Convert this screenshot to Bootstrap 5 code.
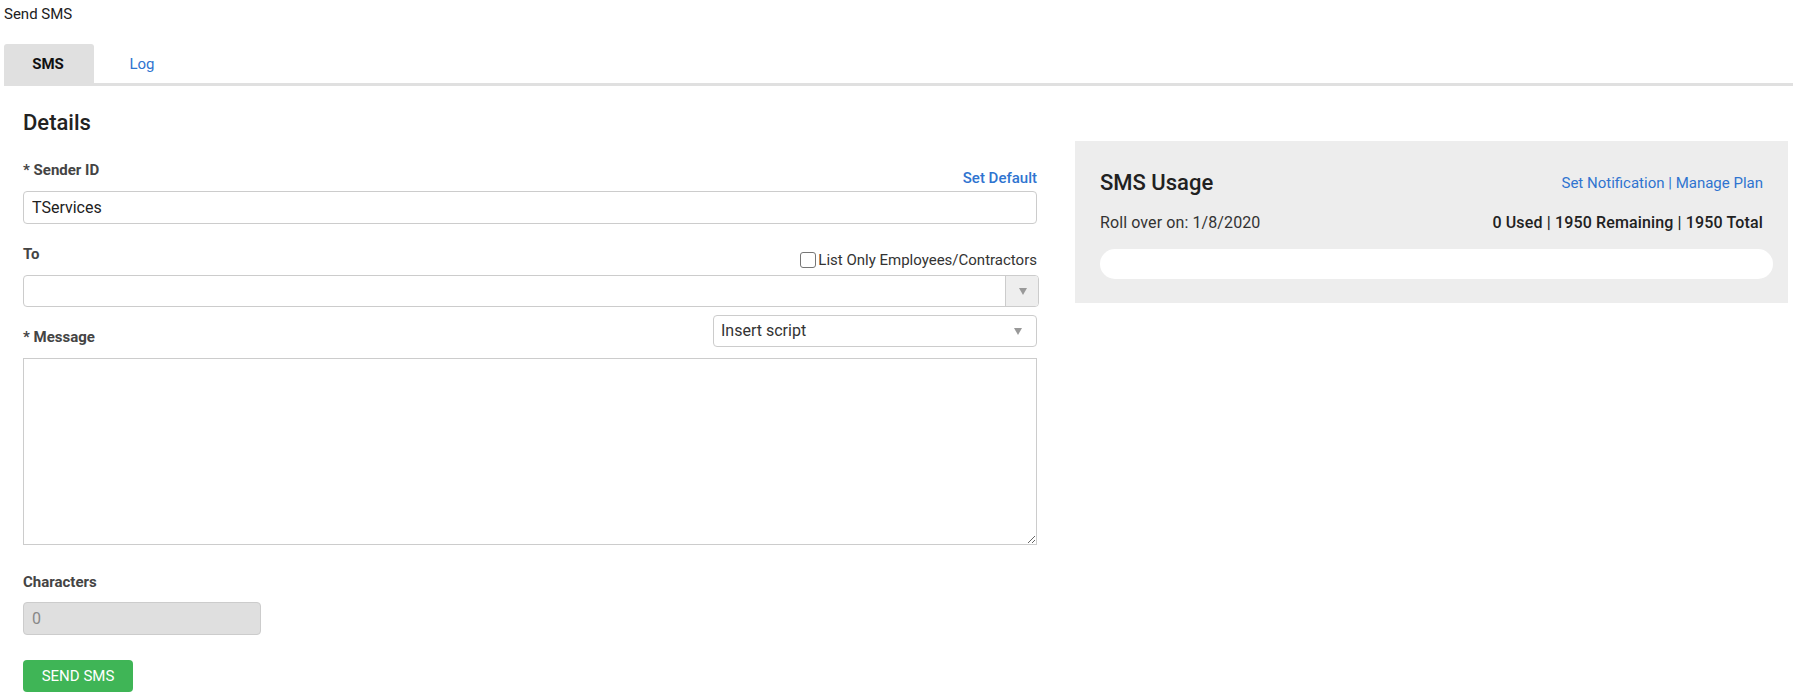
<!DOCTYPE html>
<html lang="en">
<head>
<meta charset="utf-8">
<title>Send SMS</title>
<link href="https://cdn.jsdelivr.net/npm/bootstrap@5.3.0/dist/css/bootstrap.min.css" rel="stylesheet">
<style>
html,body{height:696px;overflow:hidden;}
body{font-family:Roboto,"Liberation Sans",sans-serif;font-size:15px;color:#212121;background:#fff;}
a{color:#2f74d0;text-decoration:none;}
.page-cap{height:44px;padding:6px 0 0 4px;font-size:15px;line-height:16px;color:#212121;}
.tab-bar{border-bottom:3px solid #e0e0e0;margin-left:4px;height:42px;flex-wrap:nowrap;}
.tab-bar .nav-link{height:39px;padding:0;line-height:40px;text-align:center;font-size:15px;border-radius:3px 3px 0 0;color:#2f74d0;}
.tab-bar .nav-link.active{width:90px;padding-right:2px;background:#e0e0e0;color:#111;font-weight:700;}
.tab-bar .nav-item+.nav-item .nav-link{width:96px;}
.body-wrap{padding-left:23px;}
.left-col{width:1014px;flex:none;}
.sec-title{font-size:22px;font-weight:500;line-height:24px;margin:0;padding-top:25px;height:63px;color:#222;}
.lbl{font-size:15px;font-weight:700;color:#444;line-height:16px;margin:0;}
.lbl-row{display:flex;justify-content:space-between;}
.r1{height:42px;align-items:flex-start;padding-top:13px;}
.link-bold{font-weight:500;font-size:15px;line-height:16px;padding-top:8px;}
.fld{height:33px;border:1px solid #ccc;border-radius:4px;padding:0 8px;font-size:16px;color:#212121;box-shadow:none;line-height:31px;}
.r2{height:51px;padding-top:22px;align-items:flex-start;}
.chk-wrap{display:flex;align-items:center;gap:2px;font-size:15px;line-height:16px;color:#333;margin-top:6px;}
.chk-wrap .form-check-input{width:16px;height:16px;margin:0;border:1px solid #767676;border-radius:3px;flex:none;}
.to-sel{width:1016px;height:32px;border:1px solid #ccc;border-radius:4px;display:flex;justify-content:flex-end;overflow:hidden;}
.to-arrow{width:33px;background:#eee;border-left:1px solid #ccc;display:flex;align-items:center;justify-content:center;padding-left:1px;}
.tri{width:0;height:0;border-left:4.5px solid transparent;border-right:4.5px solid transparent;border-top:7px solid #999;}
.r3{height:51px;padding-top:8px;align-items:flex-start;}
.r3 .lbl{padding-top:14px;}
.ins-sel{width:324px;height:32px;border:1px solid #ccc;border-radius:4px;display:flex;align-items:center;justify-content:space-between;padding:0 14px 0 7px;font-size:16px;color:#333;background:#fff;}
.msg{height:187px;width:1014px;border:1px solid #ccc;border-radius:0;display:block;resize:both;padding:6px 9px;outline:none;}
.r4{padding-top:26px;height:57px;}
.fld-dis{width:238px;background:#dfdfdf!important;color:#888;}
.send-btn{margin-top:25px;width:110px;height:32px;background:#3fb556;border:0;border-radius:4px;color:#fff;font-size:15px;font-weight:400;padding:0;text-transform:uppercase;line-height:32px;display:block;}
.usage{width:713px;height:162px;margin-left:38px;margin-top:55px;background:#ededed;padding:29px 15px 0 25px;flex:none;}
.u-title{font-size:22px;font-weight:500;line-height:26px;color:#212121;margin:0;}
.u-head{display:flex;justify-content:space-between;align-items:center;padding-right:10px;}
.u-head span{font-size:15px;}
.u-line{display:flex;justify-content:space-between;font-size:16px;line-height:18px;margin-top:18px;color:#333;padding-right:10px;}
.u-line span{letter-spacing:.1px;}
.u-line strong{font-weight:500;color:#212121;letter-spacing:.14px;}
.u-bar{height:30px;border-radius:15px;background:#fff;margin-top:17px;}
</style>
</head>
<body>
<div class="page-cap">Send SMS</div>
<ul class="nav tab-bar">
  <li class="nav-item"><a class="nav-link active" href="#">SMS</a></li>
  <li class="nav-item"><a class="nav-link" href="#">Log</a></li>
</ul>
<div class="body-wrap d-flex align-items-start">
  <div class="left-col">
    <h5 class="sec-title">Details</h5>
    <div class="lbl-row r1"><label class="lbl">* Sender ID</label><a href="#" class="link-bold">Set Default</a></div>
    <input class="form-control fld" type="text" value="TServices">
    <div class="lbl-row r2"><label class="lbl">To</label>
      <label class="chk-wrap"><input type="checkbox" class="form-check-input">List Only Employees/Contractors</label></div>
    <div class="to-sel"><span class="to-arrow"><span class="tri"></span></span></div>
    <div class="lbl-row r3"><label class="lbl">* Message</label>
      <div class="ins-sel"><span>Insert script</span><span class="tri"></span></div></div>
    <textarea class="msg"></textarea>
    <div class="r4"><label class="lbl">Characters</label></div>
    <input class="form-control fld fld-dis" type="text" value="0" disabled>
    <button class="btn send-btn" type="button">Send SMS</button>
  </div>
  <div class="usage">
    <div class="u-head"><h5 class="u-title">SMS Usage</h5><span><a href="#">Set Notification</a> <a href="#">|</a> <a href="#">Manage Plan</a></span></div>
    <div class="u-line"><span>Roll over on: 1/8/2020</span><strong>0 Used | 1950 Remaining | 1950 Total</strong></div>
    <div class="u-bar"></div>
  </div>
</div>
<script src="https://cdn.jsdelivr.net/npm/bootstrap@5.3.0/dist/js/bootstrap.bundle.min.js"></script>
</body>
</html>
